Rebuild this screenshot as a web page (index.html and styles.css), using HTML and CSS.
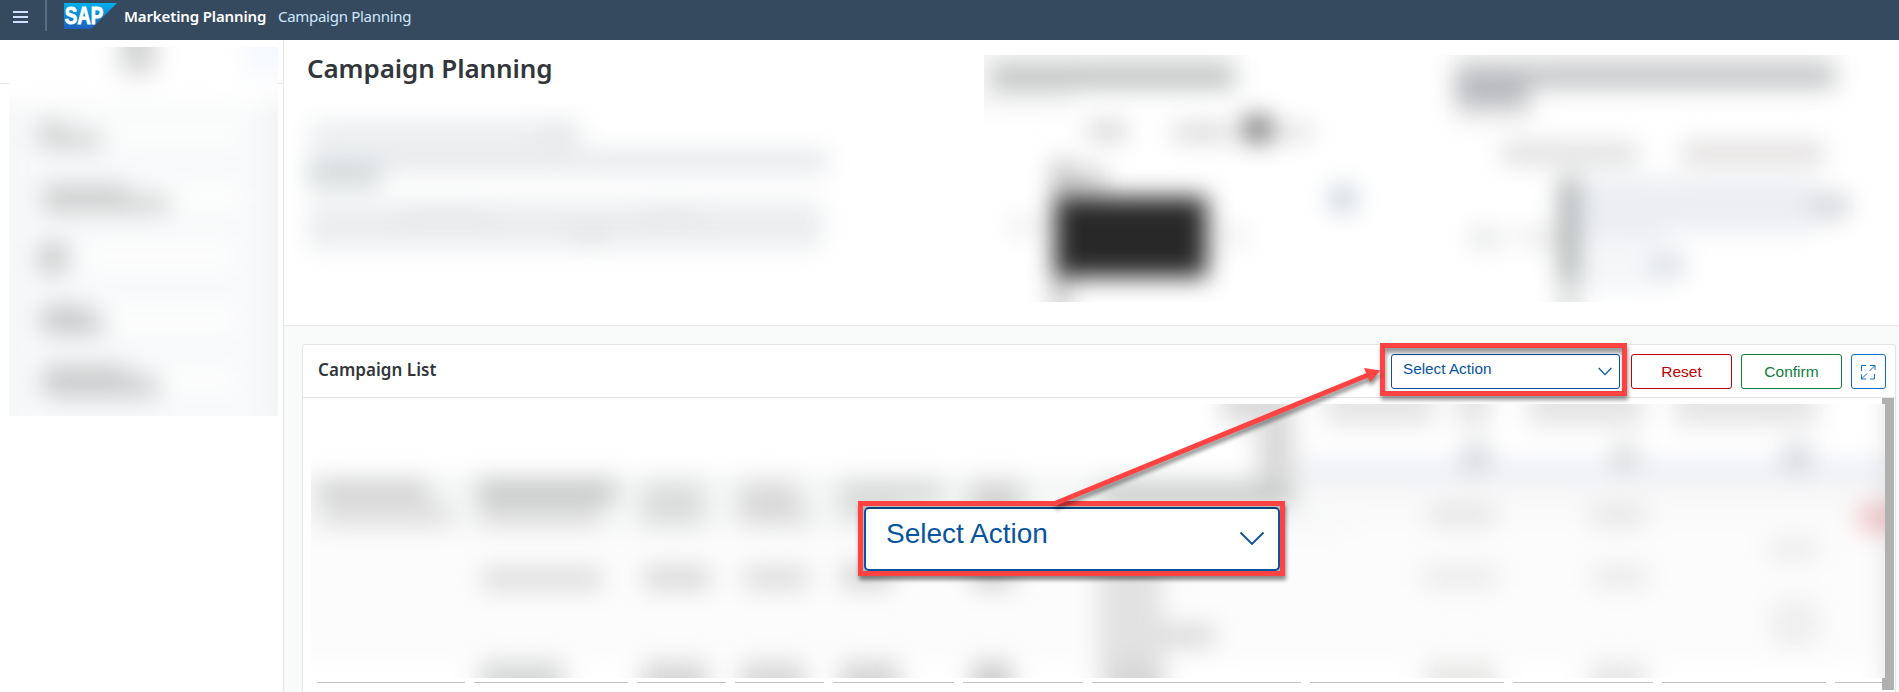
FILE: index.html
```html
<!DOCTYPE html>
<html lang="en">
<head>
<meta charset="utf-8">
<title>Campaign Planning</title>
<link rel="stylesheet" href="styles.css">
</head>
<body>
<div class="page">
<header class="shell">
  <svg class="menu" width="15" height="12" viewBox="0 0 15 12"><path d="M0 1h15M0 6h15M0 11h15" stroke="#d1e0ff" stroke-width="2"/></svg>
  <span class="divider"></span>
  <svg class="logo" width="53" height="26" viewBox="0 0 53 26">
    <defs><linearGradient id="sap" x1="0" y1="0" x2="0" y2="1"><stop offset="0" stop-color="#00b1eb"/><stop offset="1" stop-color="#1e5fbb"/></linearGradient></defs>
    <path d="M0 0h53L27 26H0z" fill="url(#sap)"/>
    <text class="logo-text" x="0.8" y="20.8" textLength="38.5" lengthAdjust="spacingAndGlyphs">SAP</text>
  </svg>
  <span class="product">Marketing Planning</span>
  <span class="crumb">Campaign Planning</span>
</header>
<div class="body">
  <aside class="side">
    <svg class="side-blur" width="269" height="369" viewBox="9 47 269 369">
      <defs><filter id="soft" filterUnits="userSpaceOnUse" x="-60" y="0" width="2020" height="740" color-interpolation-filters="sRGB"><feGaussianBlur stdDeviation="12"/></filter></defs>
      <rect x="9" y="47" width="269" height="369" fill="#fff"/>
      <g filter="url(#soft)">
        <rect x="-40" y="104" width="360" height="350" fill="#f8f9fa"/>
        <rect x="-40" y="104" width="60" height="350" fill="#f5f6f7"/>
        <rect x="270" y="100" width="50" height="320" fill="#f1f2f3"/>
        <rect x="50" y="126" width="190" height="16" fill="#fff"/>
        <rect x="120" y="186" width="120" height="20" fill="#fff"/>
        <rect x="85" y="246" width="150" height="20" fill="#fff"/>
        <rect x="110" y="308" width="125" height="20" fill="#fff"/>
        <rect x="160" y="370" width="75" height="18" fill="#fff"/>
        <rect x="121" y="20" width="34" height="54" fill="#d2d3d3"/>
        <rect x="244" y="20" width="70" height="54" fill="#f5f8fe"/>
        <rect x="38" y="120" width="28" height="16" fill="#d6d7d7"/><rect x="40" y="132" width="62" height="16" fill="#cdcfcf"/>
        <rect x="43" y="186" width="85" height="10" fill="#c6c8c8"/><rect x="43" y="195" width="126" height="17" fill="#cdcfcf"/>
        <rect x="40" y="243" width="26" height="30" fill="#c5c7c7"/>
        <rect x="42" y="306" width="46" height="12" fill="#c8caca"/><rect x="42" y="316" width="61" height="17" fill="#c4c5c6"/>
        <rect x="43" y="366" width="85" height="14" fill="#cacbcb"/><rect x="43" y="378" width="116" height="18" fill="#c8c9ca"/>
      </g>
    </svg>
  </aside>
  <main class="main">
    <section class="hero">
      <div class="intro">
        <h1>Campaign Planning</h1>
        <svg class="intro-blur" width="560" height="170" viewBox="292 103 560 170">
          <g filter="url(#soft)">
            <rect x="310" y="123" width="270" height="22" fill="#e8ebed"/>
            <rect x="540" y="122" width="36" height="22" fill="#e2e4e7"/>
            <rect x="308" y="151" width="520" height="21" fill="#e5e7ea"/>
            <rect x="308" y="166" width="72" height="21" fill="#d0d7d7"/>
            <rect x="308" y="202" width="514" height="46" fill="#ebedef"/>
            <rect x="400" y="206" width="90" height="12" fill="#e3e5e7"/>
            <rect x="640" y="206" width="60" height="12" fill="#e3e5e7"/>
            <rect x="575" y="230" width="30" height="14" fill="#dfe1e3"/>
          </g>
        </svg>
      </div>
      <svg class="chart" width="915" height="247" viewBox="984 55 915 247">
        <g filter="url(#soft)">
          <rect x="950" y="20" width="285" height="46" fill="#f6f6f6"/><rect x="990" y="66" width="245" height="22" fill="#bbbebe"/>
          <rect x="950" y="90" width="124" height="18" fill="#f3f3f3"/>
          <rect x="1087" y="122" width="40" height="18" fill="#d4d4d4"/><rect x="1173" y="124" width="58" height="17" fill="#d6d6d6"/>
          <rect x="1244" y="116" width="26" height="26" fill="#6d6d6d"/><rect x="1270" y="124" width="42" height="16" fill="#dedede"/>
          <rect x="1054" y="160" width="13" height="160" fill="#b4b4b4"/><rect x="1066" y="168" width="40" height="24" fill="#d0d0d0"/>
          <rect x="1008" y="219" width="32" height="14" fill="#e9e9e9"/><rect x="1222" y="228" width="25" height="17" fill="#ececec"/>
          <rect x="1055" y="197" width="152" height="80" fill="#282828"/>
          <rect x="1330" y="186" width="26" height="26" fill="#ccd3dd"/>
          <rect x="1455" y="20" width="380" height="46" fill="#f6f6f6"/><rect x="1455" y="66" width="380" height="21" fill="#bbbdbf"/>
          <rect x="1456" y="74" width="72" height="33" fill="#b8b9bd"/><rect x="1455" y="107" width="80" height="18" fill="#f2f2f2"/>
          <rect x="1502" y="143" width="136" height="21" fill="#dcdedc"/><rect x="1682" y="143" width="142" height="20" fill="#dedcdb"/>
          <rect x="1576" y="178" width="240" height="54" fill="#eceef2"/><rect x="1576" y="220" width="90" height="24" fill="#eceef2"/>
          <rect x="1812" y="194" width="36" height="24" fill="#d2d4d8"/>
          <rect x="1576" y="250" width="90" height="40" fill="#f4f6f8"/><rect x="1652" y="254" width="32" height="22" fill="#d8dbe1"/>
          <rect x="1470" y="228" width="32" height="20" fill="#e3e7e4"/><rect x="1518" y="228" width="40" height="18" fill="#e9ebe9"/>
          <rect x="1560" y="178" width="18" height="104" fill="#a6aaaa"/><rect x="1560" y="280" width="18" height="60" fill="#d8d9d9"/>
        </g>
      </svg>
    </section>
    <section class="card">
      <div class="card-head">
        <h2>Campaign List</h2>
        <div class="actions">
          <div class="select"><span>Select Action</span><svg width="14" height="9" viewBox="0 0 14 9"><path d="M.7 1 7 7.6 13.3 1" fill="none" stroke="#0854a0" stroke-width="1.2"/></svg></div>
          <button class="btn reset">Reset</button>
          <button class="btn confirm">Confirm</button>
          <button class="btn expand" aria-label="Expand"><svg width="16" height="16" viewBox="0 0 16 16"><path d="M1.500 7V1.500H6M10 1.500h5V6M15 1.500 9.500 7M14.500 10v5H10M1.500 10.500V15H6M1.500 15 7 9.500" fill="none" stroke="#0a6ed1" stroke-width="1"/></svg></button>
        </div>
      </div>
      <div class="grid-area">
        <div class="grid-main">
        <svg class="grid-blur" width="1574" height="274" viewBox="311 404 1574 274">
          <rect x="311" y="404" width="1574" height="274" fill="#fff"/>
          <g filter="url(#soft)">
            <rect x="270" y="472" width="1660" height="190" fill="#fcfcfc"/>
            <rect x="270" y="474" width="1080" height="56" fill="#f5f6f6"/>
            <rect x="1280" y="470" width="650" height="50" fill="#f9f9f9"/>
            <rect x="1300" y="461" width="630" height="20" fill="#ebedf3"/>
            <rect x="318" y="482" width="110" height="18" fill="#caccca"/><rect x="323" y="504" width="128" height="22" fill="#dedede"/>
            <rect x="478" y="480" width="138" height="22" fill="#c4c5c5"/><rect x="480" y="504" width="120" height="22" fill="#dcdcdc"/>
            <rect x="642" y="482" width="62" height="44" fill="#dbdcdc"/><rect x="740" y="482" width="58" height="42" fill="#d9d9d9"/><rect x="790" y="508" width="20" height="16" fill="#d9d9d9"/>
            <rect x="840" y="482" width="102" height="20" fill="#d3d4d4"/><rect x="840" y="504" width="60" height="20" fill="#e0e0e0"/><rect x="970" y="482" width="52" height="42" fill="#d2d2d2"/>
            <rect x="1098" y="484" width="196" height="22" fill="#c6c8c8"/>
            <rect x="1222" y="370" width="72" height="54" fill="#dcdcdc"/><rect x="1258" y="424" width="36" height="60" fill="#d8d8d8"/>
            <rect x="1325" y="370" width="110" height="56" fill="#e6e6e6"/><rect x="1456" y="370" width="34" height="56" fill="#e4e4e4"/><rect x="1528" y="370" width="116" height="56" fill="#e5e5e5"/><rect x="1674" y="370" width="144" height="56" fill="#e6e6e6"/>
            <rect x="1463" y="444" width="26" height="28" fill="#d3d6da"/><rect x="1613" y="444" width="24" height="28" fill="#d8dadb"/><rect x="1784" y="444" width="26" height="28" fill="#d3d6db"/>
            <rect x="1429" y="504" width="66" height="22" fill="#e5e5e5"/><rect x="1590" y="504" width="56" height="22" fill="#e6e6e6"/><rect x="1770" y="539" width="48" height="20" fill="#eaeaea"/>
            <rect x="1422" y="566" width="76" height="22" fill="#ebebeb"/><rect x="1592" y="566" width="56" height="22" fill="#eaeaea"/><rect x="1772" y="600" width="46" height="46" fill="#eee"/>
            <rect x="1425" y="662" width="72" height="50" fill="#e8e8e7"/><rect x="1590" y="662" width="56" height="50" fill="#e7e7e7"/>
            <rect x="482" y="568" width="120" height="22" fill="#dcdcdc"/><rect x="644" y="567" width="66" height="22" fill="#d6d6d6"/><rect x="744" y="567" width="64" height="22" fill="#dbdbdb"/><rect x="842" y="565" width="50" height="22" fill="#d0d0d0"/><rect x="972" y="565" width="42" height="22" fill="#ccc"/>
            <rect x="480" y="662" width="84" height="60" fill="#d6d7d7"/><rect x="642" y="662" width="66" height="60" fill="#d6d6d6"/><rect x="740" y="662" width="66" height="60" fill="#d8d8d8"/><rect x="840" y="662" width="60" height="60" fill="#d5d5d5"/><rect x="972" y="662" width="40" height="60" fill="#ccc"/>
            <rect x="1098" y="560" width="64" height="150" fill="#e2e2e2"/><rect x="1160" y="625" width="54" height="22" fill="#d9d9d9"/><rect x="1112" y="664" width="52" height="50" fill="#d5d5d5"/>
            <rect x="1860" y="505" width="70" height="26" fill="#efbdc1"/>
            <rect x="1886" y="370" width="40" height="350" fill="#c4c4c4" fill-opacity=".5"/>
          </g>
        </svg>
        <div class="rules"><i></i><i></i><i></i><i></i><i></i><i></i><i></i><i></i><i></i><i></i><i></i></div>
        </div>
        <div class="scroll"></div>
      </div>
    </section>
  </main>
</div>
<div class="frame frame-small"></div>
<div class="callout"><div class="callout-select"><span>Select Action</span><svg width="26" height="15" viewBox="0 0 26 15"><path d="M1.500 1.500 13 13 24.500 1.500" fill="none" stroke="#0854a0" stroke-width="1.800"/></svg></div></div>
<svg class="arrow" width="350" height="150" viewBox="1045 363 350 150"><path d="M1056 503 1368 375" stroke="#ff4343" stroke-width="5" stroke-linecap="round"/><path d="M1364 368 1380.500 370.500 1370 382z" fill="#ff4343"/></svg>
</div>
</body>
</html>
```
FILE: styles.css
```css
* { box-sizing: border-box; }
body { margin: 0; background: #fff; font-family: "Liberation Sans", Arial, sans-serif; color: #32363a; }
.page { position: relative; width: 1899px; height: 692px; overflow: hidden; display: flex; flex-direction: column; }
svg { display: block; flex: none; }
h1, h2 { margin: 0; font-family: "Noto Sans", sans-serif; font-weight: 600; white-space: nowrap; }

.shell { height: 40px; flex: none; background: #354a5f; display: flex; align-items: flex-start; padding-left: 13px; font-family: "Noto Sans", sans-serif; font-size: 15px; line-height: 33px; white-space: nowrap; }
.menu { margin-top: 11px; }
.divider { width: 2px; height: 31px; margin-left: 17px; background: #596c80; }
.logo { margin: 3px 0 0 17px; }
.logo-text { font: bold 23px "Liberation Sans", Arial, sans-serif; fill: #fff; stroke: #fff; stroke-width: .9px; }
.product { margin-left: 7px; width: 154px; color: #fff; font-weight: 600; letter-spacing: -.13px; }
.crumb { color: #d1e8ff; letter-spacing: -.29px; }

.body { flex: 1; min-height: 0; display: flex; }
.side { width: 284px; flex: none; border-right: 1px solid #e5e5e5; padding: 7px 0 0 9px; background: linear-gradient(#e5e5e5, #e5e5e5) 0 43px / 100% 1px no-repeat; }
.main { flex: 1; min-width: 0; background: #f9fafa; display: flex; flex-direction: column; }
.hero { height: 286px; flex: none; background: #fff; border-bottom: 1px solid #e5e5e5; display: flex; justify-content: space-between; }
.intro { padding-left: 8px; }
h1 { height: 63px; padding: 10px 0 0 15px; font-size: 26px; line-height: 36px; letter-spacing: -.1px; }
.chart { margin-top: 15px; }

.card { margin: 18px 3px 0 18px; flex: 1; min-height: 0; background: #fff; border: 1px solid #e5e5e5; border-bottom: 0; border-radius: 4px 4px 0 0; }
.card-head { height: 53px; border-bottom: 1px solid #e5e5e5; display: flex; justify-content: space-between; align-items: flex-start; padding: 9px 9px 0 15px; }
h2 { font-size: 17px; line-height: 32px; letter-spacing: .05px; }
.actions { display: flex; font-size: 15.500px; }
.select { width: 229px; height: 35px; margin-right: 11px; border: 1px solid #0854a0; border-radius: 3px; color: #0854a0; display: flex; justify-content: space-between; padding: 0 7px 0 11px; font-size: 15.300px; line-height: 27px; }
.select svg { margin-top: 12px; }
.btn { width: 101px; height: 35px; margin-right: 9px; padding: 1px 0 0; border: 1px solid; border-radius: 3px; background: #fff; font: inherit; display: grid; place-items: center; }
.reset { color: #b00; }
.confirm { color: #107e3e; }
.expand { width: 35px; margin-right: 0; padding: 0 1px 0 0; color: #0a6ed1; }

.grid-area { display: flex; height: 294px; }
.grid-main { width: 1579px; padding: 6px 0 0 8px; }
.grid-blur { position: relative; z-index: 1; }
.rules { display: grid; grid-template-columns: 148px 154px 89px 89px 121px 120px 209px 194px 140px 164px 47px; column-gap: 9px; margin: 4px 0 0 6px; height: 1px; width: 1566px; }
.rules i { background: #c4c4c4; height: 1px; }
.scroll { width: 12px; height: 292px; background: #b0b0b0; }

.frame { position: absolute; border: 5px solid #ff4343; box-shadow: 1px 4px 4px rgba(0,0,0,.4), inset 1px 5px 4px rgba(0,0,0,.4); z-index: 3; }
.frame-small { left: 1380px; top: 343px; width: 247px; height: 53px; }
.callout { position: absolute; left: 858px; top: 501px; width: 427px; height: 75px; border: 5px solid #ff4343; background: #bbb; box-shadow: 1px 4px 4px rgba(0,0,0,.45); z-index: 3; padding: 1px 0 0 1px; }
.callout-select { height: 64px; width: 416px; border: 2px solid #0854a0; border-top-color: #07437f; border-radius: 5px; background: #fff; color: #0854a0; display: flex; justify-content: space-between; padding: 0 13px 0 20px; font-size: 28px; line-height: 50px; }
.callout-select svg { margin-top: 22px; }
.arrow { position: absolute; left: 1045px; top: 363px; z-index: 4; filter: drop-shadow(1px 4px 2px rgba(0,0,0,.45)); }
```
